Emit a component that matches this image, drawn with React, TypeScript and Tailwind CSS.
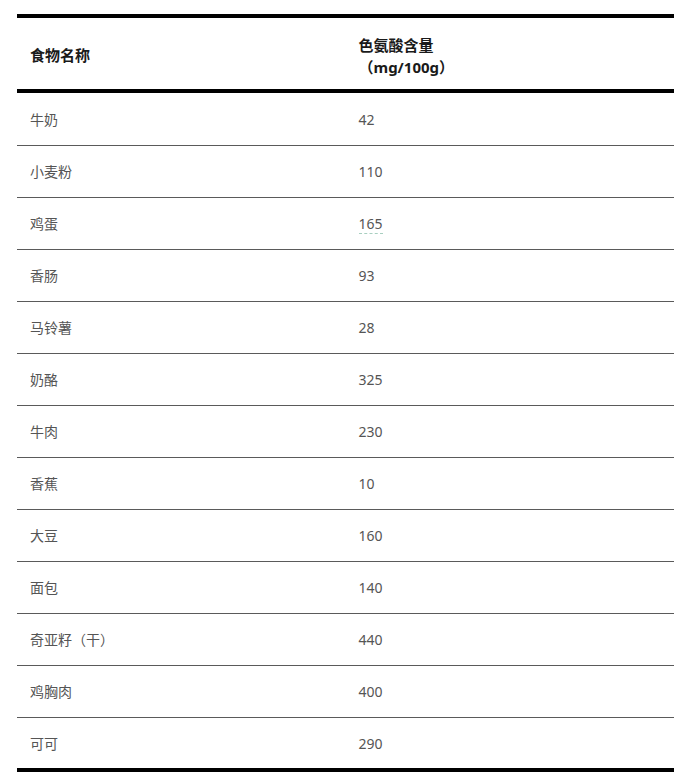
import React from "react";

const rows: [string, string][] = [
  ["牛奶", "42"],
  ["小麦粉", "110"],
  ["鸡蛋", "165"],
  ["香肠", "93"],
  ["马铃薯", "28"],
  ["奶酪", "325"],
  ["牛肉", "230"],
  ["香蕉", "10"],
  ["大豆", "160"],
  ["面包", "140"],
  ["奇亚籽（干）", "440"],
  ["鸡胸肉", "400"],
  ["可可", "290"],
];

export default function App() {
  return (
    <div
      className="w-[696px] h-[783px] bg-white pt-[14px] pl-[17px]"
      style={{ fontFamily: '"Noto Sans", "Noto Sans CJK SC", sans-serif' }}
    >
      <div className="w-[657px] border-t-[4px] border-b-[4px] border-black">
        <div className="flex h-[75px] border-b-[4px] border-black text-[15px] font-bold text-[#1a1a1a]">
          <div className="w-1/2 flex items-center pl-[13px] pt-[3px]">食物名称</div>
          <div className="w-1/2 flex flex-col justify-center pl-[13px] pt-[5px] leading-[22px]">
            <span>色氨酸含量</span>
            <span>（mg/100g）</span>
          </div>
        </div>
        {rows.map(([name, val], i) => {
          const last = i === rows.length - 1;
          const h = i === 0 ? "h-[53px]" : last ? "h-[50px]" : "h-[52px]";
          return (
            <div
              key={name}
              className={`flex ${h} text-[14px] text-[#555555] ${
                last ? "" : "border-b border-[#5a5a5a]"
              }`}
            >
              <div className="w-1/2 flex items-center pl-[13px]">{name}</div>
              <div className="w-1/2 flex items-center pl-[13px]">
                {val === "165" ? (
                  <span className="border-b border-dashed border-[#a8cfc0] leading-[19px]">{val}</span>
                ) : (
                  val
                )}
              </div>
            </div>
          );
        })}
      </div>
    </div>
  );
}
